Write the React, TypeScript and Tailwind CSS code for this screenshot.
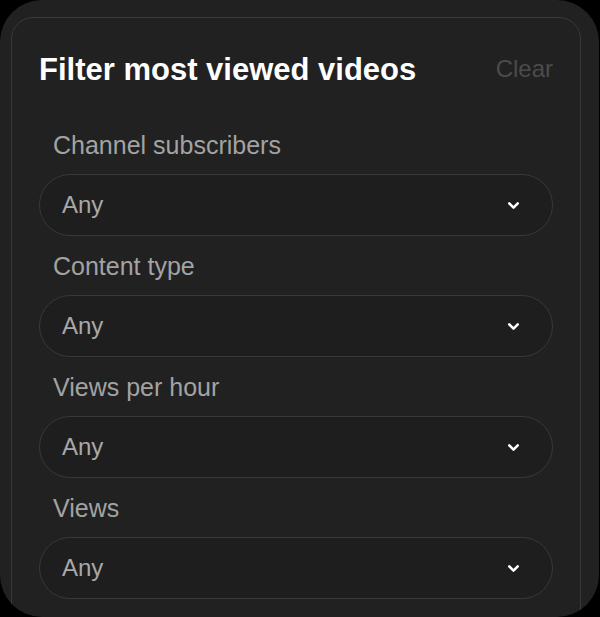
import React from "react";

const FILTERS = ["Channel subscribers", "Content type", "Views per hour", "Views"];

function Chevron() {
  return (
    <svg viewBox="0 0 24 24" fill="none" stroke="#ffffff" strokeWidth="3.6" strokeLinecap="round" strokeLinejoin="round" className="w-[17px] h-[17px]">
      <path d="m6 9 6 6 6-6" />
    </svg>
  );
}

export default function App() {
  return (
    <div className="w-[600px] h-[617px] bg-black font-['Liberation_Sans',Arial,sans-serif]">
      <div className="h-full w-[599px] rounded-[42px] bg-[#212121] overflow-hidden pt-[17px] pl-[11px] pr-[18px]">
        <div className="h-[640px] rounded-t-[22px] border border-[#393939] px-[27px] pt-[33px]">
          {/* Header */}
          <div className="flex items-center justify-between h-[36px]">
            <h2 className="text-[31px] font-bold text-white leading-none">
              Filter most viewed videos
            </h2>
            <button className="text-[24px] text-[#4b4b4b] leading-none">Clear</button>
          </div>

          {/* Filter fields */}
          <div className="flex flex-col gap-[16px] mt-[44px]">
            {FILTERS.map((label) => (
              <div key={label} className="flex flex-col gap-[15px]">
                <label className="pl-[14px] text-[25px] leading-[28px] text-[#a3a3a3]">{label}</label>
                <div className="flex items-center justify-between h-[62px] rounded-full border border-[#393939] bg-[#1e1e1e] pl-[22px] pr-[30px]">
                  <span className="text-[24px] text-[#a8a8a8]">Any</span>
                  <Chevron />
                </div>
              </div>
            ))}
          </div>
        </div>
      </div>
    </div>
  );
}
